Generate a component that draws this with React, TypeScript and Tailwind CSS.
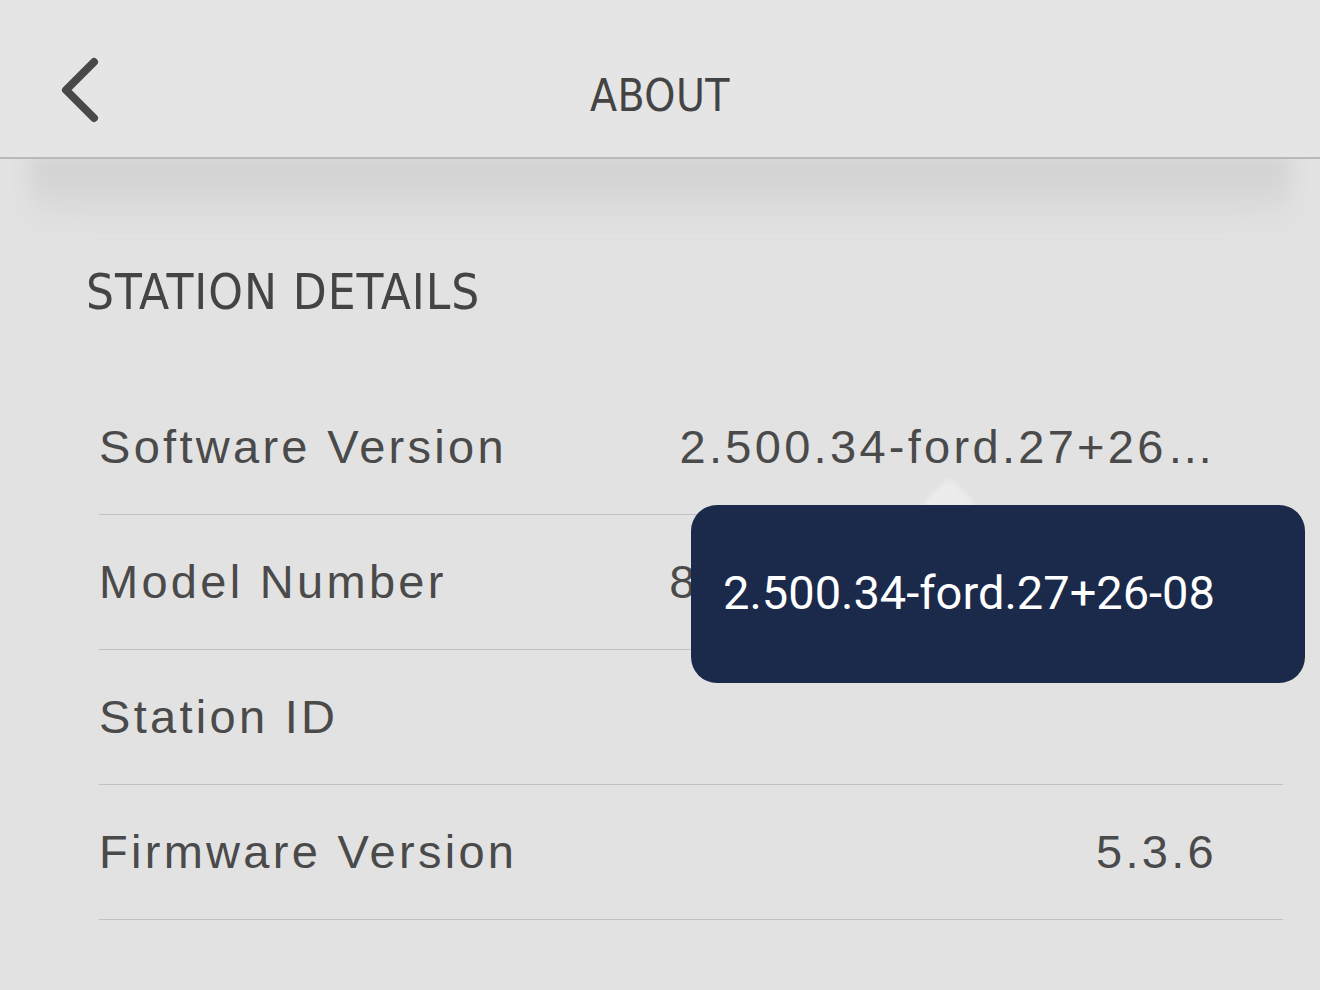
import React from 'react';

const rows = [
  { label: 'Software Version', value: '2.500.34-ford.27+26…' },
  { label: 'Model Number', value: '8A1C-10B234-CHG8.U' },
  { label: 'Station ID', value: '' },
  { label: 'Firmware Version', value: '5.3.6' },
];

const BackIcon = () => (
  <svg width="44" height="70" viewBox="0 0 44 70" fill="none">
    <path d="M36 6 L8 34 L36 62" stroke="#484848" strokeWidth="8" strokeLinecap="round" strokeLinejoin="round" />
  </svg>
);

export default function App() {
  return (
    <div className="relative w-[1320px] h-[990px] overflow-hidden bg-[#e2e2e2]">
      <header className="relative z-10 h-[159px] bg-[#e5e5e5] border-b-2 border-[#b9b9b9] flex items-center">
        <div className="absolute left-[58px] top-[56px]">
          <BackIcon />
        </div>
        <h1
          className="flex-1 text-center text-[#444] text-[44px] font-medium tracking-[0.01em] pt-[34px]"
          style={{ fontFamily: '"DejaVu Sans Condensed", "DejaVu Sans", sans-serif', fontStretch: 'condensed' }}
        >
          ABOUT
        </h1>
      </header>

      {/* header drop shadow */}
      <div className="h-[80px] mx-[30px] rounded-b-[40px] bg-gradient-to-b from-[#cfcfcf] to-[#e2e2e2] blur-[10px] -mt-[4px]" />

      <main className="mt-[18px]">
        <h2
          className="pl-[86px] h-[80px] flex items-center text-[49px] text-[#444] tracking-[0.02em]"
          style={{ fontFamily: '"DejaVu Sans Condensed", "DejaVu Sans", sans-serif', fontStretch: 'condensed' }}
        >
          STATION DETAILS
        </h2>

        <div className="ml-[99px] mr-[37px] mt-[47px]">
          {rows.map((r) => (
            <div
              key={r.label}
              className="h-[135px] border-b-[1.5px] border-[#c2c2c2] flex items-center justify-between pr-[66px] text-[#4a4a4a] text-[47px] tracking-[0.07em]"
              style={{ fontFamily: '"Liberation Sans", Arial, sans-serif' }}
            >
              <span>{r.label}</span>
              <span className="whitespace-nowrap">{r.value}</span>
            </div>
          ))}
        </div>
      </main>

      {/* tooltip */}
      <div className="absolute left-[930px] top-[485px] w-[38px] h-[38px] rotate-45 rounded-[6px] bg-[#ececec] blur-[2px]" />
      <div className="absolute left-[691px] top-[505px] w-[614px] h-[178px] rounded-[26px] bg-[#1b2a4b] flex items-center pl-[32px] pb-[2px]">
        <span
          className="text-white text-[47px]"
          style={{ fontFamily: 'Roboto, "Noto Sans", sans-serif' }}
        >
          2.500.34-ford.27+26-08
        </span>
      </div>
    </div>
  );
}
